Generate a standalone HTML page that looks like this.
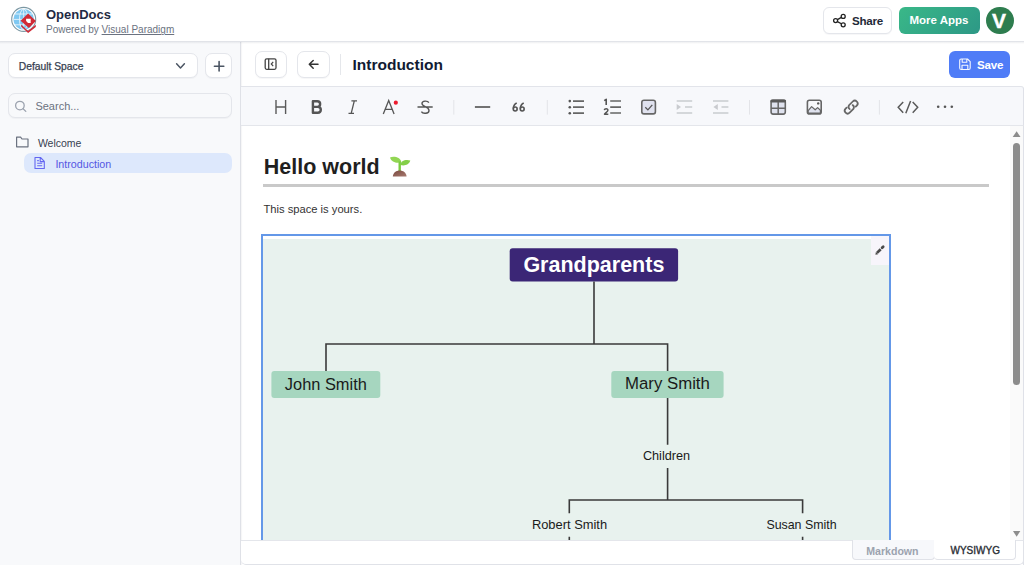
<!DOCTYPE html>
<html><head><meta charset="utf-8">
<style>
*{box-sizing:border-box;margin:0;padding:0}
html,body{width:1024px;height:565px;overflow:hidden;background:#fff;font-family:"Liberation Sans",sans-serif;color:#111827}
.a{position:absolute}
.t{position:absolute;white-space:nowrap;line-height:1}
.btn{position:absolute;background:#fff;border:1px solid #e4e6eb;border-radius:7px;box-shadow:0 1px 1px rgba(20,30,50,0.035)}
svg{position:absolute;overflow:visible}
</style></head><body>
<!-- header -->
<div class="a" style="left:0;top:0;width:1024px;height:42px;background:#fff;border-bottom:1px solid #e2e4e9"></div>
<div class="t" style="left:46px;top:7.8px;font-size:13px;font-weight:bold;color:#1f2a44">OpenDocs</div>
<div class="t" style="left:46px;top:25.2px;font-size:10px;color:#6b7280">Powered by <span style="text-decoration:underline">Visual Paradigm</span></div>
<div class="btn" style="left:823px;top:7px;width:69px;height:27px;border-radius:6px"></div>
<div class="t" style="left:852px;top:14.5px;font-size:11.6px;font-weight:bold;color:#1f2937;letter-spacing:-0.25px">Share</div>
<div class="a" style="left:898.5px;top:7px;width:81px;height:27px;border-radius:6px;background:linear-gradient(135deg,#39b888,#2d9886)"></div>
<div class="t" style="left:909.5px;top:14.9px;font-size:11.5px;font-weight:bold;color:#fff">More Apps</div>
<div class="a" style="left:986px;top:6.8px;width:27.7px;height:27.7px;border-radius:50%;background:#2e7d4f"></div>
<div class="t" style="left:992px;top:9.7px;font-size:21px;font-weight:bold;color:#fff;-webkit-text-stroke:0.4px #fff">V</div>

<!-- sidebar -->
<div class="a" style="left:0;top:42px;width:241px;height:523px;background:#f8f9fb;border-right:1px solid #dfe1e7;box-shadow:1px 0 1px rgba(20,30,50,0.04)"></div>
<div class="btn" style="left:7.5px;top:53.2px;width:190.5px;height:25.3px"></div>
<div class="t" style="left:18.75px;top:61.6px;font-size:10.3px;color:#374151;-webkit-text-stroke:0.25px #374151">Default Space</div>
<div class="btn" style="left:205.4px;top:53.2px;width:26.8px;height:25.3px"></div>
<div class="btn" style="left:7.5px;top:93.1px;width:224.8px;height:25.2px;background:#f8f9fb"></div>
<div class="t" style="left:35.4px;top:101.4px;font-size:11px;color:#6b7280">Search...</div>
<div class="t" style="left:37.9px;top:137.9px;font-size:10.5px;color:#374151">Welcome</div>
<div class="a" style="left:24px;top:153px;width:208.3px;height:20px;border-radius:7px;background:#dde8fc"></div>
<div class="t" style="left:55.4px;top:159.1px;font-size:10.7px;color:#5457e3">Introduction</div>

<div class="a" style="left:0;top:42px;width:1024px;height:2px;background:linear-gradient(rgba(20,30,50,0.07),rgba(20,30,50,0))"></div>
<!-- main top bar -->
<div class="btn" style="left:254.5px;top:51px;width:32.2px;height:26.8px"></div>
<div class="btn" style="left:297.2px;top:51px;width:32.5px;height:26.8px"></div>
<div class="a" style="left:340px;top:54px;width:1px;height:20.6px;background:#e5e7eb"></div>
<div class="t" style="left:352.5px;top:57.4px;font-size:15.5px;font-weight:bold;color:#111b33">Introduction</div>
<div class="a" style="left:949px;top:51px;width:61px;height:27px;border-radius:6px;background:#4f7cf7"></div>
<div class="t" style="left:976.9px;top:59.2px;font-size:11.6px;font-weight:bold;color:#fff;letter-spacing:-0.2px">Save</div>

<!-- toolbar -->
<div class="a" style="left:241px;top:86px;width:783px;height:40px;background:#f7f8fb;border-top:1px solid #e2e4ea;border-bottom:1px solid #e4e6eb;border-right:1px solid #dfe1e8;border-top-right-radius:3px"></div>
<div class="a" style="left:1023px;top:126px;width:1px;height:439px;background:#dfe1e8"></div>


<!-- content -->
<div class="t" style="left:263.8px;top:157px;font-size:21.5px;font-weight:bold;color:#1f1f1f">Hello world</div>
<div class="a" style="left:263px;top:184px;width:726px;height:3px;background:#c9c9c9"></div>
<div class="t" style="left:263.4px;top:203.5px;font-size:11.2px;color:#333">This space is yours.</div>

<!-- diagram -->
<div class="a" style="left:261px;top:234px;width:630px;height:306px;background:#fff;border:2px solid #6498e8;border-bottom:none;overflow:hidden">
 <div class="a" style="left:0;top:3px;width:626px;height:310px;background:#e8f2ee"></div>
 <div class="a" style="left:608px;top:0;width:18px;height:29px;background:#f7f5fb"></div>
</div>
<svg class="a" style="left:0;top:0" width="1024" height="565" viewBox="0 0 1024 565">
 <rect x="509.7" y="248.2" width="168.4" height="33.3" rx="3" fill="#3b2676"/>
 <rect x="271.4" y="371.1" width="108.9" height="27" rx="3" fill="#a6d6bf"/>
 <rect x="611.3" y="371.1" width="112.3" height="27" rx="3" fill="#a6d6bf"/>
 <g stroke="#3a3a3a" stroke-width="1.6" fill="none">
  <path d="M594 281.5 V344 M326 371.1 V344 H667.6 V371.1 M667.6 398 V444.7 M667.6 468 V500 M569.3 513.2 V500 H802.6 V513.2 M569.3 536.7 V540 M802.6 536.7 V540"/>
 </g>
 <path d="M877 252.9 L880.7 249.2" stroke="#4a4a4a" stroke-width="2.7"/><path d="M875.4 254.8 L875.9 252 L878.2 254.3 Z" fill="#4a4a4a"/><path d="M882.1 247.8 L883.2 246.7" stroke="#4a4a4a" stroke-width="2.7" stroke-linecap="round"/>
</svg>
<div class="t" style="left:509.7px;top:254.5px;width:168.4px;text-align:center;font-size:21.5px;font-weight:bold;color:#fff">Grandparents</div>
<div class="t" style="left:271.4px;top:375.7px;width:108.9px;text-align:center;font-size:16.4px;color:#1a1a1a">John Smith</div>
<div class="t" style="left:611.3px;top:376.3px;width:112.3px;text-align:center;font-size:16.8px;color:#1a1a1a">Mary Smith</div>
<div class="t" style="left:606.5px;top:449.6px;width:120px;text-align:center;font-size:12.7px;color:#1a1a1a">Children</div>
<div class="t" style="left:509.5px;top:519.4px;width:120px;text-align:center;font-size:12.9px;color:#1a1a1a">Robert Smith</div>
<div class="t" style="left:741.5px;top:519.4px;width:120px;text-align:center;font-size:12.4px;color:#1a1a1a">Susan Smith</div>

<!-- scrollbar -->
<div class="a" style="left:1010px;top:126px;width:13px;height:414px;background:#fafafa"></div>
<div class="a" style="left:1013px;top:142.5px;width:7.3px;height:242px;border-radius:4px;background:#8c8c8c"></div>

<!-- bottom bar -->
<div class="a" style="left:241px;top:540px;width:783px;height:25px;background:#fff;border-top:1px solid #e4e6eb;border-bottom:1px solid #e0e2e8;border-right:1px solid #e0e2e8;border-radius:0 0 5px 5px"></div>
<div class="a" style="left:851.5px;top:540px;width:83px;height:20px;background:#f7f8fb;border:1px solid #e0e2e8;border-top:none;border-radius:0 0 4px 4px"></div>
<div class="a" style="left:934px;top:540px;width:81.5px;height:20px;background:#fff;border:1px solid #e0e2e8;border-top:none;border-left:none;border-radius:0 0 4px 4px"></div>
<div class="t" style="left:866.2px;top:545.6px;font-size:10.6px;font-weight:bold;color:#9ca3af">Markdown</div>
<div class="t" style="left:950.5px;top:545.6px;font-size:10px;color:#2b2f36;-webkit-text-stroke:0.35px #2b2f36">WYSIWYG</div>

<!-- icons overlay -->
<svg class="a" style="left:0;top:0" width="1024" height="565" viewBox="0 0 1024 565">
 <!-- logo -->
 <g>
  <circle cx="23.7" cy="19.4" r="12" fill="#fff" stroke="#7b97a3" stroke-width="1.1"/>
  <circle cx="23.7" cy="19.4" r="10.3" fill="#7ec8f2"/>
  <g stroke="#e6f4fc" stroke-width="0.9" fill="none">
   <ellipse cx="23.7" cy="19.4" rx="4.2" ry="10.3"/>
   <line x1="23.7" y1="9" x2="23.7" y2="29.8"/>
   <line x1="13.4" y1="19.4" x2="34" y2="19.4"/>
   <line x1="15" y1="14" x2="32.4" y2="14"/>
   <line x1="15" y1="24.8" x2="32.4" y2="24.8"/>
  </g>
  <path d="M28.1 13.6 L35.9 21 L28.9 27.9 L20.6 20.7 Z" fill="#d12a36"/>
  <path d="M26.1 18.7 L30.7 18.7 L30.7 22.9 L28 23.1 L26.1 21.1 Z" fill="#fff"/>
  <path d="M21.2 24.6 L28.1 31 L35.8 24.8 L35.8 26.9 L28.1 33 L21.2 26.6 Z" fill="#d12a36"/>
 </g>
 <!-- share icon -->
 <g fill="none" stroke="#222" stroke-width="1.3">
  <circle cx="835.6" cy="20.6" r="2"/>
  <circle cx="843.2" cy="16.4" r="2"/>
  <circle cx="843.2" cy="24.8" r="2"/>
  <line x1="837.4" y1="19.6" x2="841.4" y2="17.4"/>
  <line x1="837.4" y1="21.6" x2="841.4" y2="23.8"/>
 </g>
 <!-- chevron + plus -->
 <path d="M176.6 63.8 L180.5 67.9 L184.4 63.8" fill="none" stroke="#4b5563" stroke-width="1.5" stroke-linecap="round" stroke-linejoin="round"/>
 <path d="M219.1 61.5 V71 M214.4 66.2 H223.8" fill="none" stroke="#4b5563" stroke-width="1.6" stroke-linecap="round"/>
 <!-- search -->
 <circle cx="19.9" cy="105.6" r="4.3" fill="none" stroke="#9ca3af" stroke-width="1.3"/>
 <line x1="23.1" y1="108.8" x2="25.8" y2="111.4" stroke="#9ca3af" stroke-width="1.3" stroke-linecap="round"/>
 <!-- folder -->
 <path d="M16.6 137.2 H20.6 L22 139 H28 V146.8 H16.6 Z" fill="none" stroke="#6b7280" stroke-width="1.2" stroke-linejoin="round"/>
 <!-- file -->
 <path d="M35 157.5 H40.5 L44.3 161.3 V168.5 H35 Z M40.2 157.5 V161.6 H44.3 M37.2 163.2 H42.2 M37.2 165.7 H42.2 M37.2 160.6 H38.8" fill="none" stroke="#6366f1" stroke-width="1.1" stroke-linejoin="round"/>
 <!-- sidebar toggle -->
 <rect x="265.2" y="58.8" width="10.8" height="10.5" rx="1.5" fill="none" stroke="#444" stroke-width="1.3"/>
 <line x1="268.7" y1="58.8" x2="268.7" y2="69.3" stroke="#444" stroke-width="1.3"/>
 <path d="M273.2 61.9 L271.3 64 L273.2 66.1" fill="none" stroke="#444" stroke-width="1.2"/>
 <!-- back arrow -->
 <path d="M318 64.3 H309.5 M313.2 60.5 L309.3 64.3 L313.2 68.2" fill="none" stroke="#333" stroke-width="1.5" stroke-linecap="round" stroke-linejoin="round"/>
 <!-- save icon -->
 <path d="M961.2 59 H967.5 L970.2 61.7 V68 Q970.2 69.5 968.7 69.5 H961.2 Q959.7 69.5 959.7 68 V60.5 Q959.7 59 961.2 59 Z M962.2 59 V62.2 H966.8 V59 M962 69.5 V65.3 H967.8 V69.5" fill="none" stroke="#fff" stroke-width="1.1" stroke-linejoin="round" opacity="0.95"/>

 <!-- toolbar icons -->
 <g fill="none" stroke="#5a5a5a" stroke-width="1.4" stroke-linecap="butt">
  <path d="M276 100 V114 M285.6 100 V114 M276 107 H285.6"/>
 </g>
 <path d="M312.9 101.2 H317.3 C321.1 101.2 321.1 106.9 317.3 106.9 H312.9 Z M312.9 106.9 H317.8 C321.8 106.9 321.8 112.8 317.8 112.8 H312.9 Z" fill="none" stroke="#555" stroke-width="2.4" stroke-linejoin="round"/>
 <path d="M351.4 100.9 H357 M348.5 113.4 H354 M354.3 100.9 L351.2 113.4" fill="none" stroke="#555" stroke-width="1.3"/>
 <path d="M383.3 114 L388.7 100.4 L394.1 114 M385.2 109.3 H392.2" fill="none" stroke="#555" stroke-width="1.3"/>
 <circle cx="395.8" cy="102.7" r="2.1" fill="#ec1b2e"/>
 <path d="M428.8 102.6 C427.8 100.6 422 100.3 422 103.6 C422 106.8 429 106.5 429 110.4 C429 114 422.6 113.9 421.4 111.7 M417.5 107 H432.7" fill="none" stroke="#555" stroke-width="1.4"/>
 <g fill="#e3e4e8">
  <rect x="453.3" y="100" width="1" height="14.6"/>
  <rect x="546.8" y="100" width="1" height="14.6"/>
  <rect x="749" y="100" width="1" height="14.6"/>
  <rect x="878.9" y="100" width="1" height="14.6"/>
 </g>
 <rect x="474.9" y="106" width="15.3" height="2" fill="#727272"/>
 <!-- UL -->
 <g fill="#555"><circle cx="569.8" cy="101.1" r="1.3"/><circle cx="569.8" cy="107.2" r="1.3"/><circle cx="569.8" cy="113.2" r="1.3"/></g>
 <path d="M573 101.1 H584 M573 107.2 H584 M573 113.2 H584" stroke="#666" stroke-width="1.7"/>
 <!-- 66 quote -->
 <g stroke="#555" stroke-width="1.6" fill="none">
  <circle cx="515.2" cy="109" r="1.95"/>
  <path d="M513.3 108.6 C513.4 105.9 514.6 104 516.7 103"/>
  <circle cx="522.2" cy="109" r="1.95"/>
  <path d="M520.3 108.6 C520.4 105.9 521.6 104 523.7 103"/>
 </g>
 <!-- OL numbers -->
 <path d="M604.2 100.6 L606.2 99.3 V105" fill="none" stroke="#555" stroke-width="1.6" stroke-linejoin="round"/>
 <path d="M604.3 110.1 C604.6 108.5 607.9 108.3 607.9 110.2 C607.9 111.4 605.5 112.8 604.5 114.2 H608.3" fill="none" stroke="#555" stroke-width="1.5" stroke-linejoin="round"/>
 <!-- OL -->
 <path d="M610.2 101 H621 M610.2 107.1 H621 M610.2 113 H621" stroke="#666" stroke-width="1.7"/>
 <!-- checkbox -->
 <rect x="641.8" y="100.3" width="13.6" height="13.6" rx="2.2" fill="#e0e2ef" stroke="#666" stroke-width="1.6"/>
 <path d="M645.3 107.3 L647.9 109.9 L652.3 104.9" fill="none" stroke="#555" stroke-width="1.3"/>
 <!-- indent / outdent -->
 <g stroke="#c9cbcf" stroke-width="1.5">
  <path d="M676.7 101 H692.2 M685 107 H692.2 M676.7 113 H692.2"/>
  <path d="M713 101 H728.4 M721.5 107 H728.4 M713 113 H728.4"/>
 </g>
 <path d="M676.7 104 L681 107 L676.7 110 Z" fill="#c9cbcf"/>
 <path d="M717.8 104 L713.4 107 L717.8 110 Z" fill="#c9cbcf"/>
 <!-- table -->
 <rect x="771.1" y="100.3" width="14.2" height="13.8" rx="2" fill="#dfe2ee" stroke="#666" stroke-width="1.6"/>
 <rect x="770.3" y="99.5" width="15.8" height="3" rx="1.5" fill="#5a5a5a"/>
 <path d="M778.2 102 V114 M771.1 108.2 H785.3" stroke="#666" stroke-width="1.5"/>
 <!-- image -->
 <rect x="807.4" y="100.3" width="13.8" height="13.6" rx="2" fill="none" stroke="#666" stroke-width="1.6"/>
 <path d="M808.2 110.6 L811.6 106.6 L815.2 109.8 L817.6 107.6 L820.4 110.2 V113.1 H808.2 Z" fill="#dfe2ee" stroke="#666" stroke-width="1.2" stroke-linejoin="round"/>
 <circle cx="818.2" cy="103.4" r="1.2" fill="#555"/>
 <!-- link -->
 <g fill="none" stroke="#666" stroke-width="1.6" stroke-linecap="round" transform="translate(851.2 107.1) rotate(-45) scale(1.1)">
  <path d="M3.2 2.6 H4.6 A2.6 2.6 0 0 0 4.6 -2.6 H-0.2 A2.6 2.6 0 0 0 -2.2 0.4"/>
  <path d="M-3.2 -2.6 H-4.6 A2.6 2.6 0 0 0 -4.6 2.6 H0.2 A2.6 2.6 0 0 0 2.2 -0.4"/>
 </g>
 <!-- code -->
 <path d="M903.2 102 L898.2 107.3 L903.2 112.7 M912.7 102 L917.7 107.3 L912.7 112.7 M910.6 100.9 L905.8 113.3" fill="none" stroke="#5a5a5a" stroke-width="1.5"/>
 <g fill="#555"><circle cx="938.2" cy="106.8" r="1.3"/><circle cx="945" cy="106.8" r="1.3"/><circle cx="951.8" cy="106.8" r="1.3"/></g>
 <!-- scrollbar arrows -->
 <path d="M1012.7 137 L1016.6 131.3 L1020.5 137 Z" fill="#8c8c8c"/>
 <path d="M1013 531 L1020.3 531 L1016.65 536.7 Z" fill="#8c8c8c"/>
 <!-- seedling -->
 <path d="M390 157.4 C394 155.8 400.5 157.2 401.3 162 C397.5 163.6 391.5 162.5 390 157.4 Z" fill="#92d654"/>
 <path d="M410.3 160.6 C406 159.2 400.5 160.6 400.4 165 C404 166.2 409 165.2 410.3 160.6 Z" fill="#84cf48"/>
 <rect x="398.5" y="161.5" width="2.4" height="9.5" fill="#7acb3e"/>
 <path d="M392.8 176.6 C393.2 172.6 396.3 170.6 399.7 170.6 C403.1 170.6 406.2 172.6 406.6 176.6 Z" fill="url(#soil)"/>
 <defs><linearGradient id="soil" x1="0" y1="0" x2="1" y2="1"><stop offset="0" stop-color="#7a4a40"/><stop offset="1" stop-color="#a87a70"/></linearGradient></defs>
</svg>
</body></html>
